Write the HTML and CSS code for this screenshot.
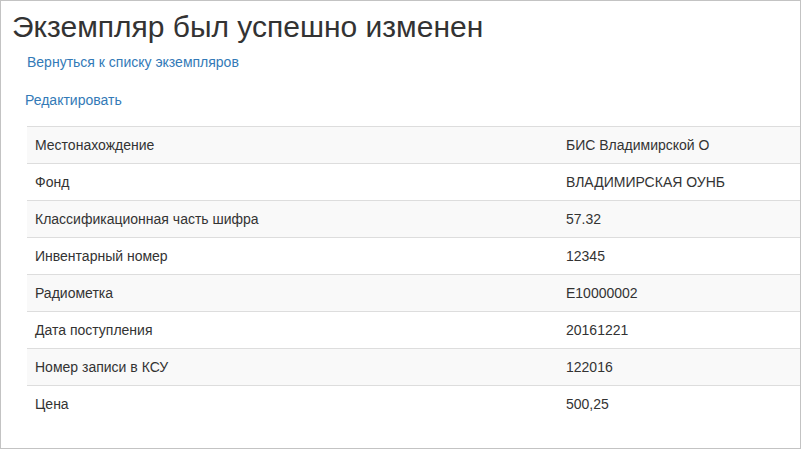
FILE: index.html
```html
<!DOCTYPE html>
<html lang="ru">
<head>
<meta charset="utf-8">
<title>Экземпляр</title>
<link rel="stylesheet" href="styles.css">
</head>
<body>
<div class="frame">
  <h1 class="title">Экземпляр был успешно изменен</h1>
  <div class="links">
    <a class="back" href="#">Вернуться к списку экземпляров</a>
    <a class="edit" href="#">Редактировать</a>
  </div>
  <table class="details">
    <tbody>
      <tr><td class="key">Местонахождение</td><td>БИС Владимирской О</td></tr>
      <tr><td class="key">Фонд</td><td>ВЛАДИМИРСКАЯ ОУНБ</td></tr>
      <tr><td class="key">Классификационная часть шифра</td><td>57.32</td></tr>
      <tr><td class="key">Инвентарный номер</td><td>12345</td></tr>
      <tr><td class="key">Радиометка</td><td>E10000002</td></tr>
      <tr><td class="key">Дата поступления</td><td>20161221</td></tr>
      <tr><td class="key">Номер записи в КСУ</td><td>122016</td></tr>
      <tr><td class="key">Цена</td><td>500,25</td></tr>
    </tbody>
  </table>
</div>
</body>
</html>
```

FILE: styles.css
```css
html, body {
  margin: 0;
  padding: 0;
  background: #fff;
}
body {
  font-family: "Liberation Sans", Arial, sans-serif;
  font-size: 14px;
  line-height: 20px;
  color: #333;
}
.frame {
  box-sizing: border-box;
  width: 801px;
  height: 449px;
  border: 1px solid #c3c3c3;
  overflow: hidden;
}
.title {
  margin: 0;
  padding: 8px 0 0 11px;
  font-size: 30px;
  line-height: 36px;
  font-weight: 500;
  color: #333;
  letter-spacing: 0;
}
.links {
  display: flex;
  flex-direction: column;
  align-items: flex-start;
  padding: 0 0 0 26px;
}
.links a {
  color: #337ab7;
  text-decoration: none;
}
.back {
  margin-top: 7px;
}
.edit {
  margin-top: 18px;
  margin-left: -2px;
}
.details {
  margin: 16px 0 0 26px;
  border-collapse: collapse;
  border-spacing: 0;
  width: 900px;
}
.details td {
  padding: 8px;
  border-top: 1px solid #ddd;
  line-height: 20px;
  vertical-align: top;
  white-space: nowrap;
}
.details td.key {
  width: 515px;
}
.details tr:nth-child(odd) td {
  background: #f9f9f9;
}
```
